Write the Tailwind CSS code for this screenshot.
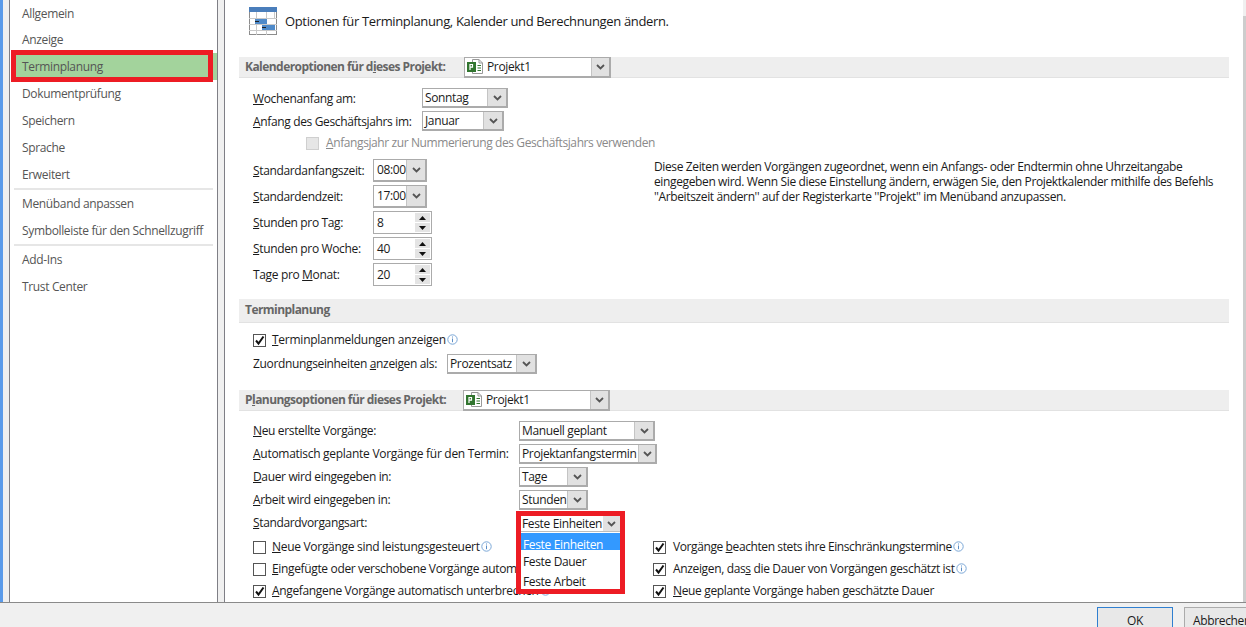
<!DOCTYPE html>
<html lang="de">
<head>
    <meta charset="UTF-8">
    <title>Projektoptionen</title>
    <script src="https://cdn.jsdelivr.net/npm/@tailwindcss/browser@4"></script>
</head>
<body class="bg-[#f0f0f0]">
    <svg class="hidden">
        <symbol id="chev" viewBox="0 0 9 6"><path d="M1 1 L4.5 4.5 L8 1" fill="none" stroke="#555" stroke-width="1.8"/></symbol>
        <symbol id="up" viewBox="0 0 7 4"><path d="M3.5 0 L7 4 H0 Z" fill="#111"/></symbol>
        <symbol id="down" viewBox="0 0 7 4"><path d="M0 0 H7 L3.5 4 Z" fill="#111"/></symbol>
        <symbol id="tick" viewBox="0 0 11 11"><path d="M2 5.5 L4.5 8.5 L9.5 1.5" fill="none" stroke="#111" stroke-width="2"/></symbol>
        <symbol id="info" viewBox="0 0 11 11"><circle cx="5.5" cy="5.5" r="4.7" fill="#fff" stroke="#7ba7d7"/><path d="M5.5 4.5 V8.2 M5.5 2.5 V3.5" stroke="#5b8ec7" stroke-width="1"/></symbol>
        <symbol id="proj" viewBox="0 0 18 17"><path d="M6.5 1.5 H13 L16.5 5 V15.5 H6.5 Z" fill="#fff" stroke="#999"/><path d="M13 1.5 V5 H16.5" fill="none" stroke="#999"/><rect x="1" y="4" width="9" height="10" fill="#31752f"/><path d="M4 12 V6.5 H6.5 V9.2 H4" fill="none" stroke="#fff" stroke-width="1.2"/><path d="M11.5 7.5 H15 M11.5 10 H15 M11.5 12.5 H15" stroke="#31752f"/></symbol>
    </svg>

    <div class="flex flex-col h-[627px] w-[1246px] overflow-hidden font-['Open_Sans',sans-serif] text-[12px] tracking-[-0.35px] text-[#1a1a1a]">
        <div class="flex h-[606px]">
            <!-- linker Rand -->
            <div class="w-[3px] bg-[#5b9bea]"></div>
            <div class="w-[6px] bg-[#f0f0f0]"></div>

            <!-- Seitenleiste -->
            <nav class="relative w-[209px] bg-white border-x border-[#7f7f86] text-[#555]">
                <div class="h-[26px] pl-[12px] pt-[1px] flex items-center">Allgemein</div>
                <div class="h-[27px] pl-[12px] pt-[1px] flex items-center">Anzeige</div>
                <div class="h-[27px] pl-[7px] pt-[1px] flex items-center bg-[#a3d39c] ml-[5px]">Terminplanung</div>
                <div class="h-[27px] pl-[12px] pt-[1px] flex items-center">Dokumentprüfung</div>
                <div class="h-[27px] pl-[12px] pt-[1px] flex items-center">Speichern</div>
                <div class="h-[27px] pl-[12px] pt-[1px] flex items-center">Sprache</div>
                <div class="h-[27px] pl-[12px] pt-[1px] flex items-center">Erweitert</div>
                <div class="h-[2px] mx-[4px] bg-[#e6e6e6]"></div>
                <div class="h-[27px] pl-[12px] pt-[1px] flex items-center">Menüband anpassen</div>
                <div class="h-[27px] pl-[12px] pt-[1px] flex items-center">Symbolleiste für den Schnellzugriff</div>
                <div class="h-[2px] mx-[4px] bg-[#e6e6e6]"></div>
                <div class="h-[27px] pl-[12px] pt-[1px] flex items-center">Add-Ins</div>
                <div class="h-[27px] pl-[12px] pt-[1px] flex items-center">Trust Center</div>
                <!-- rote Markierung -->
                <div class="absolute left-[1px] top-[50px] w-[202px] h-[32px] border-[5px] border-[#ed1c24]"></div>
            </nav>

            <div class="w-[6px] bg-[#f0f0f0]"></div>

            <!-- Inhalt -->
            <main class="relative flex-1 bg-white border-l border-[#7f7f86] pl-[14px] pr-[14px]">
                <div class="flex items-center h-[57px] pl-[10px] pb-[15px] gap-[8px]">
                    <svg width="28" height="28" viewBox="0 0 28 28">
                        <rect x="0.5" y="0.5" width="27" height="27" fill="#fff" stroke="#8c8c8c"/>
                        <rect x="0" y="0" width="28" height="5" fill="#4a7ebb"/>
                        <path d="M7.5 5 V28 M17.5 5 V28 M0 11.5 H28 M0 17.5 H28 M0 23.5 H28 M25.5 5 V12" stroke="#c9c9c9"/>
                        <rect x="6" y="12" width="12" height="5" fill="#4f8ac9"/>
                        <rect x="13" y="18" width="13" height="5" fill="#4f8ac9"/>
                        <path d="M6 14.5 H10 M13 20.5 H17" stroke="#222"/>
                    </svg>
                    <span class="text-[13px] tracking-[-0.35px] pt-[1px]">Optionen für Terminplanung, Kalender und Berechnungen ändern.</span>
                </div>

                <!-- Kalenderoptionen -->
                <div class="flex items-center h-[21px] bg-[#eeeeee] border-b border-[#e2e2e2] pl-[6px]">
                    <b class="w-[219px] text-[#666] font-bold tracking-[-0.55px]">Kalenderoptionen für d<u>i</u>eses Projekt:</b>
                    <div class="flex items-center h-[21px] w-[147px] border border-r-2 border-b-2 border-[#ababab] bg-white">
                        <svg class="ml-[1px] mr-[3px]" width="18" height="17"><use href="#proj"/></svg>
                        <span class="flex-1">Projekt1</span>
                        <span class="flex items-center justify-center w-[18px] h-full bg-[#e1e1e1] border-l border-[#c4c4c4]"><svg width="9" height="6"><use href="#chev"/></svg></span>
                    </div>
                </div>

                <div class="relative">
                    <div class="flex items-center h-[20px] mt-[10px] pl-[14px]">
                        <span class="w-[169px] pt-[1px]"><u>W</u>ochenanfang am:</span>
                        <div class="flex h-[20px] w-[86px] border border-r-2 border-b-2 border-[#ababab] bg-white items-center"><span class="flex-1 pl-[2px]">Sonntag</span><span class="flex items-center justify-center w-[19px] h-full bg-[#e1e1e1] border-l border-[#c4c4c4]"><svg width="9" height="6"><use href="#chev"/></svg></span></div>
                    </div>
                    <div class="flex items-center h-[20px] mt-[3px] pl-[14px]">
                        <span class="w-[169px] pt-[1px]"><u>A</u>nfang des Geschäftsjahrs im:</span>
                        <div class="flex h-[20px] w-[82px] border border-r-2 border-b-2 border-[#ababab] bg-white items-center"><span class="flex-1 pl-[2px]">Januar</span><span class="flex items-center justify-center w-[19px] h-full bg-[#e1e1e1] border-l border-[#c4c4c4]"><svg width="9" height="6"><use href="#chev"/></svg></span></div>
                    </div>
                    <div class="flex items-center h-[20px] mt-[2px] pl-[67px] text-[#8a8a8a]">
                        <span class="w-[13px] h-[13px] bg-[#e6e6e6] border border-[#cfcfcf] mr-[7px]"></span>
                        <span class="tracking-[-0.4px]"><u>A</u>nfangsjahr zur Nummerierung des Geschäftsjahrs verwenden</span>
                    </div>

                    <div class="flex mt-[6px] pl-[14px]">
                        <div class="flex flex-col gap-[3px] w-[401px]">
                            <div class="flex items-center h-[23px]">
                                <span class="w-[120px]"><u>S</u>tandardanfangszeit:</span>
                                <div class="flex h-[23px] w-[54px] border border-r-2 border-b-2 border-[#ababab] bg-white items-center"><span class="flex-1 pl-[3px]">08:00</span><span class="flex items-center justify-center w-[19px] h-full bg-[#e1e1e1] border-l border-[#c4c4c4]"><svg width="9" height="6"><use href="#chev"/></svg></span></div>
                            </div>
                            <div class="flex items-center h-[23px]">
                                <span class="w-[120px]"><u>S</u>tandardendzeit:</span>
                                <div class="flex h-[23px] w-[54px] border border-r-2 border-b-2 border-[#ababab] bg-white items-center"><span class="flex-1 pl-[3px]">17:00</span><span class="flex items-center justify-center w-[19px] h-full bg-[#e1e1e1] border-l border-[#c4c4c4]"><svg width="9" height="6"><use href="#chev"/></svg></span></div>
                            </div>
                            <div class="flex items-center h-[23px]">
                                <span class="w-[120px]"><u>S</u>tunden pro Tag:</span>
                                <div class="flex h-[23px] w-[59px] border border-[#ababab] bg-white items-center"><span class="flex-1 pl-[3px]">8</span>
                                    <span class="flex flex-col w-[15px] mr-[1px] gap-[1px]"><span class="flex items-center justify-center h-[9px] bg-[#e4e4e4]"><svg width="7" height="4"><use href="#up"/></svg></span><span class="flex items-center justify-center h-[9px] bg-[#e4e4e4]"><svg width="7" height="4"><use href="#down"/></svg></span></span></div>
                            </div>
                            <div class="flex items-center h-[23px]">
                                <span class="w-[120px]"><u>S</u>tunden pro Woche:</span>
                                <div class="flex h-[23px] w-[59px] border border-[#ababab] bg-white items-center"><span class="flex-1 pl-[3px]">40</span>
                                    <span class="flex flex-col w-[15px] mr-[1px] gap-[1px]"><span class="flex items-center justify-center h-[9px] bg-[#e4e4e4]"><svg width="7" height="4"><use href="#up"/></svg></span><span class="flex items-center justify-center h-[9px] bg-[#e4e4e4]"><svg width="7" height="4"><use href="#down"/></svg></span></span></div>
                            </div>
                            <div class="flex items-center h-[23px]">
                                <span class="w-[120px]">Tage pro <u>M</u>onat:</span>
                                <div class="flex h-[23px] w-[59px] border border-[#ababab] bg-white items-center"><span class="flex-1 pl-[3px]">20</span>
                                    <span class="flex flex-col w-[15px] mr-[1px] gap-[1px]"><span class="flex items-center justify-center h-[9px] bg-[#e4e4e4]"><svg width="7" height="4"><use href="#up"/></svg></span><span class="flex items-center justify-center h-[9px] bg-[#e4e4e4]"><svg width="7" height="4"><use href="#down"/></svg></span></span></div>
                            </div>
                        </div>
                        <p class="w-[564px] leading-[15px] tracking-[-0.37px]">Diese Zeiten werden Vorgängen zugeordnet, wenn ein Anfangs- oder Endtermin ohne Uhrzeitangabe eingegeben wird. Wenn Sie diese Einstellung ändern, erwägen Sie, den Projektkalender mithilfe des Befehls ''Arbeitszeit ändern'' auf der Registerkarte ''Projekt'' im Menüband anzupassen.</p>
                    </div>
                </div>

                <!-- Terminplanung -->
                <div class="flex items-center h-[24px] mt-[13px] bg-[#eeeeee] border-b border-[#e2e2e2] pl-[6px] pb-[2px]">
                    <b class="text-[#666] font-bold tracking-[-0.55px]">Terminplanung</b>
                </div>
                <div class="flex items-center h-[20px] mt-[7px] pl-[14px]">
                    <span class="flex items-center justify-center w-[13px] h-[13px] border border-[#555] mr-[6px]"><svg width="11" height="11"><use href="#tick"/></svg></span>
                    <span class="tracking-[-0.25px]"><u>T</u>erminplanmeldungen anzeigen</span>
                    <svg class="ml-[1px] mb-[2px]" width="11" height="11"><use href="#info"/></svg>
                </div>
                <div class="flex items-center h-[20px] mt-[4px] pl-[14px]">
                    <span class="w-[194px]">Zuordnungseinheiten <u>a</u>nzeigen als:</span>
                    <div class="flex h-[20px] w-[90px] border border-r-2 border-b-2 border-[#ababab] bg-white items-center"><span class="flex-1 pl-[2px]">Prozentsatz</span><span class="flex items-center justify-center w-[19px] h-full bg-[#e1e1e1] border-l border-[#c4c4c4]"><svg width="9" height="6"><use href="#chev"/></svg></span></div>
                </div>

                <!-- Planungsoptionen -->
                <div class="flex items-center h-[21px] mt-[16px] bg-[#eeeeee] border-b border-[#e2e2e2] pl-[6px]">
                    <b class="w-[218px] text-[#666] font-bold tracking-[-0.55px]">P<u>l</u>anungsoptionen für dieses Projekt:</b>
                    <div class="flex items-center h-[21px] w-[147px] border border-r-2 border-b-2 border-[#ababab] bg-white">
                        <svg class="ml-[1px] mr-[3px]" width="18" height="17"><use href="#proj"/></svg>
                        <span class="flex-1">Projekt1</span>
                        <span class="flex items-center justify-center w-[18px] h-full bg-[#e1e1e1] border-l border-[#c4c4c4]"><svg width="9" height="6"><use href="#chev"/></svg></span>
                    </div>
                </div>

                <div class="flex items-center h-[20px] mt-[10px] pl-[14px]">
                    <span class="w-[266px]"><u>N</u>eu erstellte Vorgänge:</span>
                    <div class="flex h-[20px] w-[136px] border border-r-2 border-b-2 border-[#ababab] bg-white items-center"><span class="flex-1 pl-[2px]">Manuell geplant</span><span class="flex items-center justify-center w-[19px] h-full bg-[#e1e1e1] border-l border-[#c4c4c4]"><svg width="9" height="6"><use href="#chev"/></svg></span></div>
                </div>
                <div class="flex items-center h-[20px] mt-[3px] pl-[14px]">
                    <span class="w-[266px] tracking-[-0.28px]"><u>A</u>utomatisch geplante Vorgänge für den Termin:</span>
                    <div class="flex h-[20px] w-[138px] border border-r-2 border-b-2 border-[#ababab] bg-white items-center"><span class="flex-1 pl-[2px]">Projektanfangstermin</span><span class="flex items-center justify-center w-[17px] h-full bg-[#e1e1e1] border-l border-[#c4c4c4]"><svg width="9" height="6"><use href="#chev"/></svg></span></div>
                </div>
                <div class="flex items-center h-[20px] mt-[3px] pl-[14px]">
                    <span class="w-[266px]"><u>D</u>auer wird eingegeben in:</span>
                    <div class="flex h-[20px] w-[69px] border border-r-2 border-b-2 border-[#ababab] bg-white items-center"><span class="flex-1 pl-[2px]">Tage</span><span class="flex items-center justify-center w-[19px] h-full bg-[#e1e1e1] border-l border-[#c4c4c4]"><svg width="9" height="6"><use href="#chev"/></svg></span></div>
                </div>
                <div class="flex items-center h-[20px] mt-[3px] pl-[14px]">
                    <span class="w-[266px]"><u>A</u>rbeit wird eingegeben in:</span>
                    <div class="flex h-[20px] w-[69px] border border-r-2 border-b-2 border-[#ababab] bg-white items-center"><span class="flex-1 pl-[2px]">Stunden</span><span class="flex items-center justify-center w-[19px] h-full bg-[#e1e1e1] border-l border-[#c4c4c4]"><svg width="9" height="6"><use href="#chev"/></svg></span></div>
                </div>
                <div class="flex items-center h-[20px] mt-[3px] pl-[14px]">
                    <span><u>S</u>tandardvorgangsart:</span>
                </div>

                <div class="flex mt-[3px] pl-[14px]">
                    <div class="w-[400px] whitespace-nowrap">
                        <div class="flex items-center h-[22px]">
                            <span class="w-[13px] h-[13px] border border-[#555] mr-[6px]"></span>
                            <span class="tracking-[-0.3px]"><u>N</u>eue Vorgänge sind leistungsgesteuert</span>
                            <svg class="ml-[1px] mb-[2px]" width="11" height="11"><use href="#info"/></svg>
                        </div>
                        <div class="flex items-center h-[22px]">
                            <span class="w-[13px] h-[13px] border border-[#555] mr-[6px]"></span>
                            <span class="w-[244px] overflow-hidden"><u>E</u>ingefügte oder verschobene Vorgänge automatisch teilen</span>
                        </div>
                        <div class="flex items-center h-[22px]">
                            <span class="flex items-center justify-center w-[13px] h-[13px] border border-[#555] mr-[6px]"><svg width="11" height="11"><use href="#tick"/></svg></span>
                            <span><u>A</u>ngefangene Vorgänge automatisch unterbrechen</span>
                            <svg class="ml-[1px] mb-[2px]" width="11" height="11"><use href="#info"/></svg>
                        </div>
                    </div>
                    <div class="whitespace-nowrap">
                        <div class="flex items-center h-[22px]">
                            <span class="flex items-center justify-center w-[13px] h-[13px] border border-[#555] mr-[7px]"><svg width="11" height="11"><use href="#tick"/></svg></span>
                            <span class="tracking-[-0.4px]">Vorgänge <u>b</u>eachten stets ihre Einschränkungstermine</span>
                            <svg class="ml-[1px] mb-[2px]" width="11" height="11"><use href="#info"/></svg>
                        </div>
                        <div class="flex items-center h-[22px]">
                            <span class="flex items-center justify-center w-[13px] h-[13px] border border-[#555] mr-[7px]"><svg width="11" height="11"><use href="#tick"/></svg></span>
                            <span>Anzeigen, das<u>s</u> die Dauer von Vorgängen geschätzt ist</span>
                            <svg class="ml-[1px] mb-[2px]" width="11" height="11"><use href="#info"/></svg>
                        </div>
                        <div class="flex items-center h-[22px]">
                            <span class="flex items-center justify-center w-[13px] h-[13px] border border-[#555] mr-[7px]"><svg width="11" height="11"><use href="#tick"/></svg></span>
                            <span><u>N</u>eue geplante Vorgänge haben geschätzte Dauer</span>
                        </div>
                    </div>
                </div>

                <!-- aufgeklappte Liste mit roter Markierung -->
                <div class="absolute left-[291px] top-[511px] w-[109px] h-[83px] border-[5px] border-[#ed1c24] bg-white">
                    <div class="flex items-center h-[16px] border-b border-[#bdbdbd]">
                        <span class="flex-1 pl-[1px]">Feste Einheiten</span>
                        <span class="flex items-center justify-center w-[17px] h-full bg-[#e1e1e1]"><svg width="9" height="6"><use href="#chev"/></svg></span>
                    </div>
                    <div class="flex items-end h-[17px] mt-[1px] pl-[2px] bg-[#3399ff] text-white leading-[11px]">Feste Einheiten</div>
                    <div class="flex items-center h-[24px] pl-[2px]">Feste Dauer</div>
                    <div class="flex items-center h-[15px] pl-[2px]">Feste Arbeit</div>
                </div>
            </main>

            <!-- Bildlaufleiste -->
            <div class="flex flex-col w-[3px]">
                <div class="h-[16px] bg-[#f0f0f0]"></div>
                <div class="flex-1 bg-[#cdcdcd]"></div>
            </div>
        </div>

        <!-- Fussleiste -->
        <footer class="flex-1 flex items-start gap-[11px] pl-[1097px] pt-[4px] bg-[#f0f0f0] border-t border-[#8a8a8a]">
            <button class="shrink-0 h-[26px] w-[76px] border border-[#2f7fd0] bg-[#e8e8e8] pt-[1px]">OK</button>
            <button class="shrink-0 h-[26px] w-[76px] border border-[#ababab] bg-[#e8e8e8] pt-[1px]">Abbrechen</button>
        </footer>
    </div>
</body>
</html>
